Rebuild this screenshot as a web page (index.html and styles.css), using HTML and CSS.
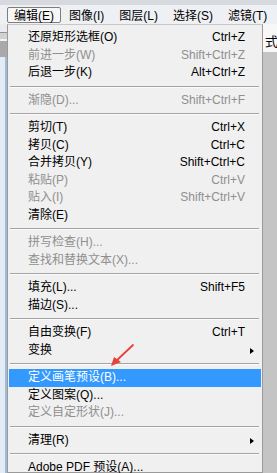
FILE: index.html
```html
<!DOCTYPE html>
<html lang="zh-CN">
<head>
    <meta charset="UTF-8">
    <title>编辑菜单</title>
    <link rel="stylesheet" href="styles.css">
</head>
<body>
    <div class="menubar">
        <div class="bar-items">
            <span class="bar-item active">编辑(E)</span>
            <span class="bar-item">图像(I)</span>
            <span class="bar-item">图层(L)</span>
            <span class="bar-item">选择(S)</span>
            <span class="bar-item">滤镜(T)</span>
            <span class="bar-item">视</span>
        </div>
    </div>

    <div class="workspace">
        <div class="side-left">
            <div class="opt-top"></div>
            <div class="opt-field"></div>
            <div class="opt-gap"></div>
            <div class="opt-gray"></div>
            <div class="panel"></div>
        </div>

        <div class="menu">
            <div class="row"><span class="label">还原矩形选框(O)</span><span class="key">Ctrl+Z</span><span class="sub"></span></div>
            <div class="row off"><span class="label">前进一步(W)</span><span class="key">Shift+Ctrl+Z</span><span class="sub"></span></div>
            <div class="row"><span class="label">后退一步(K)</span><span class="key">Alt+Ctrl+Z</span><span class="sub"></span></div>
            <div class="sep"></div>
            <div class="row off"><span class="label">渐隐(D)...</span><span class="key">Shift+Ctrl+F</span><span class="sub"></span></div>
            <div class="sep"></div>
            <div class="row"><span class="label">剪切(T)</span><span class="key">Ctrl+X</span><span class="sub"></span></div>
            <div class="row"><span class="label">拷贝(C)</span><span class="key">Ctrl+C</span><span class="sub"></span></div>
            <div class="row"><span class="label">合并拷贝(Y)</span><span class="key">Shift+Ctrl+C</span><span class="sub"></span></div>
            <div class="row off"><span class="label">粘贴(P)</span><span class="key">Ctrl+V</span><span class="sub"></span></div>
            <div class="row off"><span class="label">贴入(I)</span><span class="key">Shift+Ctrl+V</span><span class="sub"></span></div>
            <div class="row"><span class="label">清除(E)</span><span class="key"></span><span class="sub"></span></div>
            <div class="sep"></div>
            <div class="row off"><span class="label">拼写检查(H)...</span><span class="key"></span><span class="sub"></span></div>
            <div class="row off"><span class="label">查找和替换文本(X)...</span><span class="key"></span><span class="sub"></span></div>
            <div class="sep"></div>
            <div class="row"><span class="label">填充(L)...</span><span class="key">Shift+F5</span><span class="sub"></span></div>
            <div class="row"><span class="label">描边(S)...</span><span class="key"></span><span class="sub"></span></div>
            <div class="sep"></div>
            <div class="row"><span class="label">自由变换(F)</span><span class="key">Ctrl+T</span><span class="sub"></span></div>
            <div class="row"><span class="label">变换</span><span class="key"></span><span class="sub"><i class="arrow"></i></span></div>
            <div class="sep"></div>
            <div class="row hot"><span class="label">定义画笔预设(B)...</span><span class="key"></span><span class="sub"></span></div>
            <div class="row"><span class="label">定义图案(Q)...</span><span class="key"></span><span class="sub"></span></div>
            <div class="row off"><span class="label">定义自定形状(J)...</span><span class="key"></span><span class="sub"></span></div>
            <div class="sep"></div>
            <div class="row"><span class="label">清理(R)</span><span class="key"></span><span class="sub"><i class="arrow"></i></span></div>
            <div class="sep"></div>
            <div class="row"><span class="label">Adobe PDF 预设(A)...</span><span class="key"></span><span class="sub"></span></div>
        </div>

        <div class="side-right">
            <div class="opt-white"><span class="cut-text">式</span></div>
        </div>
    </div>

    <!-- red pointer drawn on top of the menu -->
    <svg class="pointer" width="40" height="40" viewBox="0 0 40 40">
        <line x1="33" y1="5" x2="15" y2="22" stroke="#e8403a" stroke-width="1.8" stroke-linecap="round"/>
        <polygon points="11,26 14,17 21,22" fill="#e8403a"/>
    </svg>
</body>
</html>
```

FILE: styles.css
```css
body {
    margin: 0;
    width: 277px;
    height: 473px;
    overflow: hidden;
    background: #c4c4c4;
    font-family: "Liberation Sans", "Noto Sans CJK SC", sans-serif;
    font-size: 12px;
    color: #000;
    position: relative;
}

/* top menu bar */
.menubar {
    height: 24px;
    border-top: 5px solid #d6dadf;
    box-sizing: border-box;
    background: #eef0f3;
    overflow: hidden;
}
.bar-items {
    display: flex;
    gap: 1px;
    padding: 2px 0 0 7px;
    white-space: nowrap;
}
.bar-item {
    height: 16px;
    line-height: 16px;
    padding: 0 6px;
    border: 1px solid transparent;
    box-sizing: border-box;
}
.bar-item.active {
    border-color: #7d7d7d;
    border-radius: 2px;
    background: #f7f7f7;
}

.workspace {
    display: flex;
    height: 449px;
}

/* strips of the window seen beside the menu */
.side-left {
    width: 7px;
    display: flex;
    flex-direction: column;
}
.opt-top {
    height: 8px;
    background: #e9ebee;
}
.opt-field {
    height: 6px;
    background: #cfd1d4;
    border-top: 1px solid #8f9296;
}
.opt-gap {
    height: 2px;
    background: #f2f2f2;
}
.opt-gray {
    height: 16px;
    background: #a9a9a9;
}
.panel {
    flex: 1;
    background: #e3ebf4;
    border-right: 2px solid #9fbbd9;
}

.side-right {
    flex: 1;
    overflow: hidden;
}
.opt-white {
    height: 28px;
    background: #f7f7f7;
    overflow: hidden;
    white-space: nowrap;
}
.cut-text {
    display: block;
    font-size: 13px;
    line-height: 13px;
    padding: 11px 0 0 2px;
}

/* the dropdown */
.menu {
    width: 256px;
    box-sizing: border-box;
    background: #f0f0f0;
    border: 1px solid #9a9a9a;
    border-top-color: #c8c8c8;
    padding: 4px 1px 0;
}
.row {
    display: flex;
    height: 17.5px;
    line-height: 17.5px;
    white-space: nowrap;
}
.label {
    flex: 1;
    padding-left: 19px;
}
.key {
    text-align: right;
}
.sub {
    width: 16px;
    position: relative;
}
.arrow {
    position: absolute;
    left: 5px;
    top: 6px;
    border-left: 4px solid #000;
    border-top: 3.5px solid transparent;
    border-bottom: 3.5px solid transparent;
}
.row.off {
    color: #8f8f8f;
}
.row.hot {
    background: #3399ff;
    color: #fff;
}
.sep {
    height: 10px;
    display: flex;
    align-items: center;
    padding: 0 2px 0 1px;
}
.sep::before {
    content: "";
    flex: 1;
    border-top: 1px solid #a3a3a3;
    border-bottom: 1px solid #fbfbfb;
}

.pointer {
    position: absolute;
    left: 100px;
    top: 340px;
}
```
